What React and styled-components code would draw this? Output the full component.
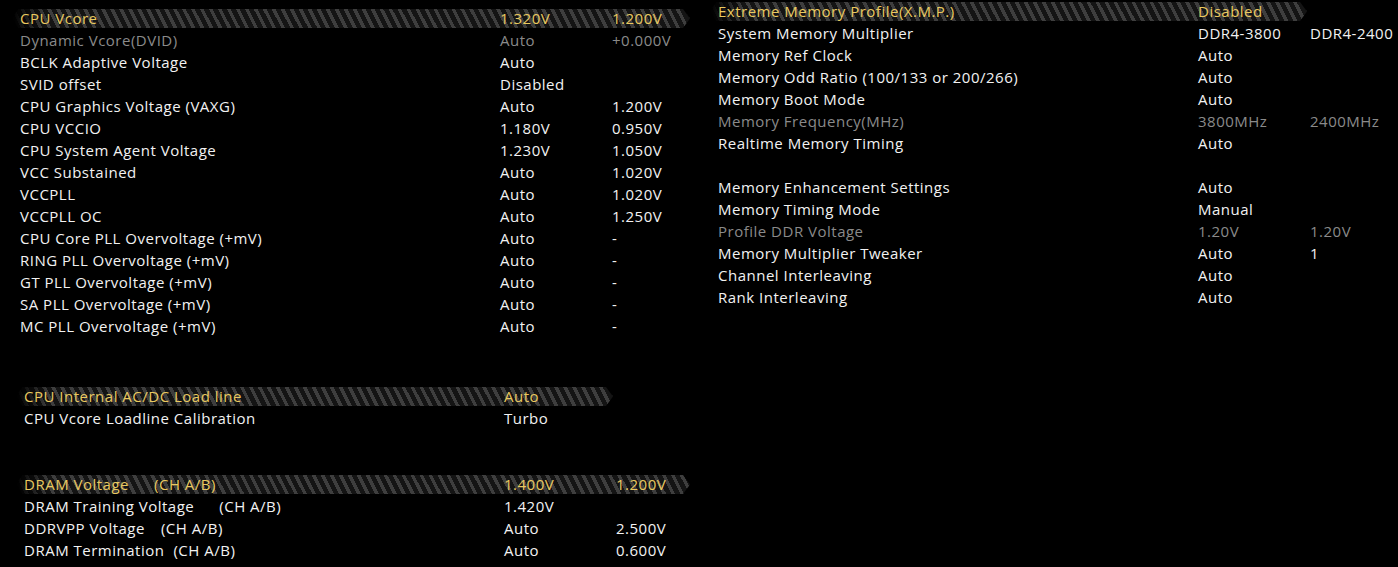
import React from "react";
import styled, { createGlobalStyle } from "styled-components";

const GlobalStyle = createGlobalStyle`
  html, body {
    margin: 0;
    padding: 0;
    background: #000;
  }
  body {
    font-family: "Open Sans", "Noto Sans", "DejaVu Sans", sans-serif;
    font-size: 15px;
    letter-spacing: 0.5px;
    color: #f2f2f2;
    width: 1398px;
    height: 567px;
    overflow: hidden;
  }
`;

const Screen = styled("div")`
  display: grid;
  grid-template-columns: 702px 1fr;
  height: 567px;
  background: #000;
`;

const Panel = styled("div")`
  display: flex;
  flex-direction: column;
  padding-top: ${(p) => p.top || 0}px;
  padding-left: ${(p) => p.left || 0}px;
`;

const Section = styled("div")`
  display: flex;
  flex-direction: column;
  margin-top: ${(p) => p.gap || 0}px;
  padding-left: ${(p) => p.indent || 0}px;
`;

const Row = styled("div")`
  position: relative;
  isolation: isolate;
  display: grid;
  grid-template-columns: 480px 112px 1fr;
  align-items: center;
  height: 22px;
  padding-left: 8px;
  white-space: nowrap;
  color: ${(p) => (p.active ? "#e9c960" : p.dim ? "#8a8a8a" : "#f2f2f2")};

  &::before {
    content: ${(p) => (p.active ? '""' : "none")};
    position: absolute;
    z-index: -1;
    left: 0;
    top: 2px;
    height: 19px;
    width: ${(p) => p.bar || 0}px;
    background: repeating-linear-gradient(
      63deg,
      #3e3e3e 0px,
      #3e3e3e 3.4px,
      #141414 3.4px,
      #141414 8px
    );
    clip-path: polygon(
      0 50%,
      6px 0,
      calc(100% - 7px) 0,
      100% 50%,
      calc(100% - 7px) 100%,
      6px 100%
    );
    -webkit-mask-image: linear-gradient(to right, transparent 0, #000 34px);
    mask-image: linear-gradient(to right, transparent 0, #000 34px);
  }
`;

const Blank = styled("div")`
  height: 22px;
`;

const Suffix = styled("span")`
  margin-left: ${(p) => p.space}px;
`;

const Item = ({ label, suffix, space, v1, v2, ...rest }) => (
  <Row {...rest}>
    <span>
      {label}
      {suffix && <Suffix space={space}>{suffix}</Suffix>}
    </span>
    <span>{v1}</span>
    <span>{v2}</span>
  </Row>
);

const cpuRows = [
  ["Dynamic Vcore(DVID)", "Auto", "+0.000V", true],
  ["BCLK Adaptive Voltage", "Auto", ""],
  ["SVID offset", "Disabled", ""],
  ["CPU Graphics Voltage (VAXG)", "Auto", "1.200V"],
  ["CPU VCCIO", "1.180V", "0.950V"],
  ["CPU System Agent Voltage", "1.230V", "1.050V"],
  ["VCC Substained", "Auto", "1.020V"],
  ["VCCPLL", "Auto", "1.020V"],
  ["VCCPLL OC", "Auto", "1.250V"],
  ["CPU Core PLL Overvoltage (+mV)", "Auto", "-"],
  ["RING PLL Overvoltage (+mV)", "Auto", "-"],
  ["GT PLL Overvoltage (+mV)", "Auto", "-"],
  ["SA PLL Overvoltage (+mV)", "Auto", "-"],
  ["MC PLL Overvoltage (+mV)", "Auto", "-"],
];

const dramRows = [
  ["DRAM Training Voltage", 25, "1.420V", ""],
  ["DDRVPP Voltage", 16, "Auto", "2.500V"],
  ["DRAM Termination", 9, "Auto", "0.600V"],
];

const memRows = [
  ["System Memory Multiplier", "DDR4-3800", "DDR4-2400"],
  ["Memory Ref Clock", "Auto", ""],
  ["Memory Odd Ratio (100/133 or 200/266)", "Auto", ""],
  ["Memory Boot Mode", "Auto", ""],
  ["Memory Frequency(MHz)", "3800MHz", "2400MHz", true],
  ["Realtime Memory Timing", "Auto", ""],
];

const memRows2 = [
  ["Memory Enhancement Settings", "Auto", ""],
  ["Memory Timing Mode", "Manual", ""],
  ["Profile DDR Voltage", "1.20V", "1.20V", true],
  ["Memory Multiplier Tweaker", "Auto", "1"],
  ["Channel Interleaving", "Auto", ""],
  ["Rank Interleaving", "Auto", ""],
];

const App = () => {
  return (
    <>
      <GlobalStyle />
      <Screen>
        <Panel top={7} left={12}>
          <Section>
            <Item active bar={678} label="CPU Vcore" v1="1.320V" v2="1.200V" />
            {cpuRows.map(([label, v1, v2, dim]) => (
              <Item key={label} label={label} v1={v1} v2={v2} dim={dim} />
            ))}
          </Section>
          <Section gap={48} indent={4}>
            <Item
              active
              bar={597}
              label="CPU Internal AC/DC Load line"
              v1="Auto"
            />
            <Item label="CPU Vcore Loadline Calibration" v1="Turbo" />
          </Section>
          <Section gap={44} indent={4}>
            <Item
              active
              bar={674}
              label="DRAM Voltage"
              suffix="(CH A/B)"
              space={25}
              v1="1.400V"
              v2="1.200V"
            />
            {dramRows.map(([label, space, v1, v2]) => (
              <Item
                key={label}
                label={label}
                suffix="(CH A/B)"
                space={space}
                v1={v1}
                v2={v2}
              />
            ))}
          </Section>
        </Panel>
        <Panel left={8}>
          <Section>
            <Item
              active
              bar={597}
              label="Extreme Memory Profile(X.M.P.)"
              v1="Disabled"
            />
            {memRows.map(([label, v1, v2, dim]) => (
              <Item key={label} label={label} v1={v1} v2={v2} dim={dim} />
            ))}
            <Blank />
            {memRows2.map(([label, v1, v2, dim]) => (
              <Item key={label} label={label} v1={v1} v2={v2} dim={dim} />
            ))}
          </Section>
        </Panel>
      </Screen>
    </>
  );
};

export default App;
